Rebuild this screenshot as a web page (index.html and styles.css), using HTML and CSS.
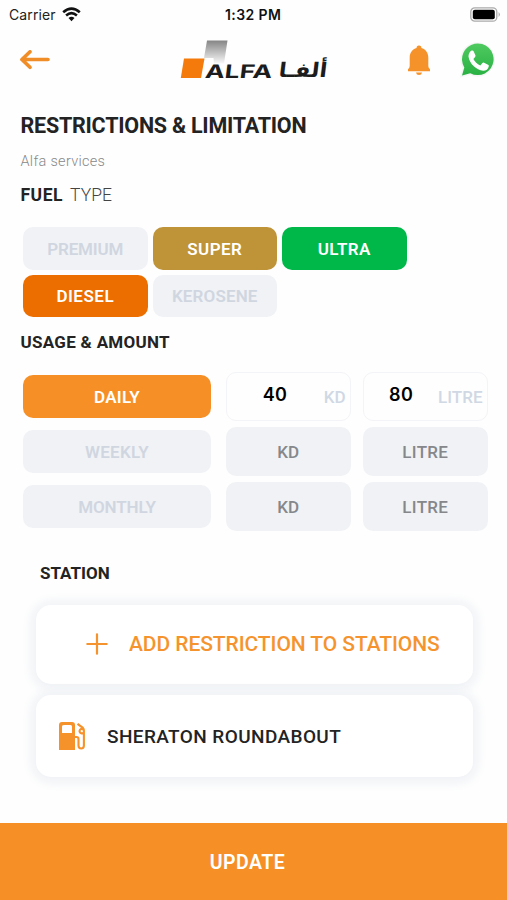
FILE: index.html
```html
<!DOCTYPE html>
<html lang="en">
<head>
<meta charset="utf-8">
<title>Restrictions &amp; Limitation</title>
<link rel="stylesheet" href="styles.css">
</head>
<body>
<div class="screen">
  <div class="status">
    <div class="carrier"><span>Carrier</span>
      <svg width="19" height="15" viewBox="0 0 19 15" fill="none" stroke="#111" stroke-width="2.6"><path d="M1.2 5.3Q9.500-2 17.8 5.3M4.1 8.500q5.4-4.6 10.8 0"/><path d="M9.500 14.2 6.500 11q3-2.6 6 0z" fill="#111" stroke="none"/></svg>
    </div>
    <div class="clock">1:32 PM</div>
    <svg class="battery" width="31" height="15" viewBox="0 0 31 15"><rect x=".8" y=".8" width="26" height="13.4" rx="4" fill="#fff" stroke="#aaa" stroke-width="1.3"/><rect x="2.8" y="2.7" width="22" height="9.6" rx="2" fill="#000"/><path d="M28.6 5q2.6 2.5 0 5z" fill="#aaa"/></svg>
  </div>
  <header class="topbar">
    <svg class="back" width="31" height="20" viewBox="0 0 31 20" fill="none" stroke="#f18d27" stroke-width="3.6" stroke-linecap="round" stroke-linejoin="round"><path d="M29 9.500H3.500M11 1.800 2.900 9.500l8.100 7.800"/></svg>
    <svg class="logo" width="150" height="42" viewBox="0 0 150 42">
      <defs><linearGradient id="g" x1="0" y1="0" x2="0" y2="1"><stop offset="0" stop-color="#858585"/><stop offset="1" stop-color="#f8f8f8"/></linearGradient></defs>
      <path d="M27 1.500h20.500l-3.500 23H34l-.5-5.500H24z" fill="url(#g)"/>
      <path d="M4 19.500h20.500l-3.500 19.500H.8z" fill="#f47a0c"/>
      <text class="logo-latin" transform="translate(24.500 38.500) skewX(-7)" textLength="67" lengthAdjust="spacingAndGlyphs">ALFA</text>
      <text class="logo-arabic" transform="translate(98 38) skewX(-7)" textLength="48.500" lengthAdjust="spacingAndGlyphs">ألفـا</text>
    </svg>
    <svg class="bell" width="24" height="31" viewBox="0 0 24 31" fill="#f6922a"><path d="M12 .5a2.400 2.400 0 0 1 2.400 2.600C18.600 4.200 21.300 8 21.300 12.500v8.500q0 2 1.700 3.200v2H1v-2q1.700-1.200 1.700-3.200v-8.500C2.700 8 5.400 4.200 9.600 3.100A2.400 2.400 0 0 1 12 .5z"/><path d="M9 27.600h6q-.4 2.500-3 2.500t-3-2.500z"/></svg>
    <svg class="whatsapp" width="37" height="38" viewBox="0 0 37 38"><defs><linearGradient id="w" x1="0" y1="0" x2="0" y2="1"><stop offset="0" stop-color="#4fca60"/><stop offset="1" stop-color="#29b143"/></linearGradient></defs><path d="M1 36.500 3.600 27A17.300 17.300 0 1 1 11 34z" fill="#f5f5f5"/><path d="M3 34.500 5.300 26.500A15.800 15.800 0 1 1 11.300 32.200z" fill="url(#w)"/><path d="M12.200 9.800c.8-.5 1.900-.6 2.400.4l1.800 4.100c.3.700 0 1.300-.5 1.900l-1.500 1.800c1.500 3 3.700 5 6.900 6.400l2.100-2.300c.5-.5 1-.7 1.700-.4l3.900 2c.8.400.9.800.8 1.600-.4 3-3 4.500-5.600 4.500-6.800-.5-14-7.200-14.700-14.200 0-2.400 1-4.600 2.700-5.800z" fill="#fff"/></svg>
  </header>
  <main class="content">
    <h1>RESTRICTIONS &amp; LIMITATION</h1>
    <p class="subtitle">Alfa services</p>
    <h2 class="fuel-title"><span class="fuel">FUEL</span><span class="type">TYPE</span></h2>
    <div class="fuels">
      <button class="chip off premium">PREMIUM</button>
      <button class="chip super">SUPER</button>
      <button class="chip ultra">ULTRA</button>
      <button class="chip diesel">DIESEL</button>
      <button class="chip off kerosene">KEROSENE</button>
    </div>
    <h2 class="usage-title">USAGE &amp; AMOUNT</h2>
    <div class="usage">
      <button class="chip daily">DAILY</button>
      <div class="field"><b class="kd-value">40</b><span class="kd">KD</span></div>
      <div class="field"><b class="litre-value">80</b><span class="litre">LITRE</span></div>
      <button class="chip off weekly">WEEKLY</button>
      <div class="amount kd">KD</div>
      <div class="amount litre">LITRE</div>
      <button class="chip off monthly">MONTHLY</button>
      <div class="amount kd">KD</div>
      <div class="amount litre">LITRE</div>
    </div>
    <section class="stations">
      <h2 class="station-title">STATION</h2>
      <div class="card add">
        <svg width="22" height="22" viewBox="0 0 22 22" stroke="#f5942e" stroke-width="2.200" stroke-linecap="round"><path d="M11 1.300v19.400M1.300 11h19.400"/></svg>
        <span class="add-label">ADD RESTRICTION TO STATIONS</span>
      </div>
      <div class="card station">
        <svg width="27" height="28" viewBox="0 0 27 28"><path fill="#f6922a" fill-rule="evenodd" d="M3 0h10q3 0 3 3v25H0V3q0-3 3-3zm1.500 3q-1.500 0-1.500 1.500V11h10V4.500Q13 3 11.500 3z"/><path d="M16 15h1.500q2 0 2 2v6.500q0 3 2.700 3t2.700-3V8.500q0-1.500-1-2.600L18.500 1.800M24 7.500l-1.300-.7a2.300 2.300 0 1 0 1.800 3.900" fill="none" stroke="#f6922a" stroke-width="2.100"/></svg>
        <span class="station-label">SHERATON ROUNDABOUT</span>
      </div>
    </section>
  </main>
  <button class="update"><span>UPDATE</span></button>
</div>
</body>
</html>
```
FILE: styles.css
```css
* { box-sizing: border-box; margin: 0; padding: 0; }
body { background: #fefefe; color: #232323; font-family: Roboto, "Liberation Sans", sans-serif; }
button { border: 0; font-family: inherit; }
.screen { width: 507px; height: 900px; display: flex; flex-direction: column; overflow: hidden; }
.status { height: 28px; display: grid; grid-template-columns: 1fr 58px 1fr; align-items: center; padding: 0 6px 0 9px; font-family: Inter, sans-serif; font-size: 14px; }
.carrier { display: flex; align-items: center; gap: 6px; letter-spacing: .1px; color: #222; }
.clock { font-weight: 600; font-size: 14px; white-space: nowrap; letter-spacing: .4px; margin-left: -1px; color: #111; }
.battery { justify-self: end; }
.topbar { height: 64px; display: flex; align-items: center; padding: 0 11px 0 19px; }
.logo { margin-left: 130px; overflow: visible; }
.logo-latin { font: 700 18.500px Inter, sans-serif; fill: #1c1c1c; }
.logo-arabic { font: 700 20px "DejaVu Sans", sans-serif; fill: #1c1c1c; }
.bell { margin-left: 77px; }
.whatsapp { margin-left: auto; }
.content { height: 731px; padding: 20px 19px 0 20px; }
h1 { font-size: 21.500px; line-height: 28px; font-weight: 700; letter-spacing: -.23px; white-space: nowrap; padding-left: .5px; }
.subtitle { margin-top: 11px; line-height: 22px; font-size: 14.500px; color: #888; font-weight: 300; letter-spacing: .3px; padding-left: .5px; }
h2 { font-size: 17px; line-height: 22px; white-space: nowrap; padding-left: .5px; }
.fuel-title { margin-top: 11px; display: flex; gap: 7px; }
.fuel { font-size: 17.500px; letter-spacing: .5px; }
.type { font-weight: 300; color: #444; font-size: 17.500px; letter-spacing: .1px; }
.fuels { margin: 21px 0 0 3px; display: grid; grid-template-columns: repeat(3, 124.500px); column-gap: 5px; row-gap: 5px; }
.chip { height: 42.500px; border-radius: 10px; color: #fff; font-size: 17px; font-weight: 600; text-align: center; padding-top: 1px; }
.off { background: #f0f2f6; color: #d0d6e0; }
.premium { letter-spacing: -.15px; }
.super { background: #bf9338; letter-spacing: .4px; }
.ultra { background: #00b84a; letter-spacing: .4px; }
.diesel { background: #ed6e00; letter-spacing: .5px; }
.kerosene { letter-spacing: .15px; }
.usage-title { margin-top: 14px; letter-spacing: .3px; }
.usage { margin: 19px 0 0 3px; display: grid; grid-template-columns: 190.500px 124.500px 124.500px; column-gap: 12.500px; row-gap: 6px; align-items: center; }
.usage .chip { width: 188px; }
.daily, .weekly { letter-spacing: .3px; }
.monthly { letter-spacing: -.1px; }
.daily { background: #f69026; }
.field, .amount { height: 49px; border-radius: 10px; font-size: 17px; display: flex; align-items: center; }
.field { border: 1.500px solid #f3f4f7; justify-content: flex-end; padding-right: 4px; color: #d0d8e4; font-weight: 500; }
.field b { font: 600 18px/20px Inter, sans-serif; color: #000; margin-bottom: 3px; letter-spacing: .3px; }
.kd-value { margin-right: 36.500px; }
.litre-value { margin-right: 25px; }
.amount { background: #f0f2f5; color: #85878b; justify-content: center; font-weight: 500; padding-top: 1px; }
.amount.litre { letter-spacing: .3px; }
.stations { padding: 31px 15px 0 16px; }
.station-title { padding-left: 4px; }
.card { height: 79px; border-radius: 15px; background: #fff; box-shadow: 0 1px 12px 4px #edf0f4; display: flex; align-items: center; font-weight: 500; white-space: nowrap; }
.add { margin-top: 20.500px; padding-left: 50px; gap: 21px; color: #f5942e; font-size: 21px; letter-spacing: -.08px; }
.station { margin-top: 11.500px; height: 82px; padding-left: 23px; gap: 21px; font-size: 19px; letter-spacing: .4px; }
.update { height: 77px; background: #f69026; color: #fff; font-size: 19.500px; font-weight: 600; letter-spacing: .5px; padding: 1px 12px 0 0; }
```
